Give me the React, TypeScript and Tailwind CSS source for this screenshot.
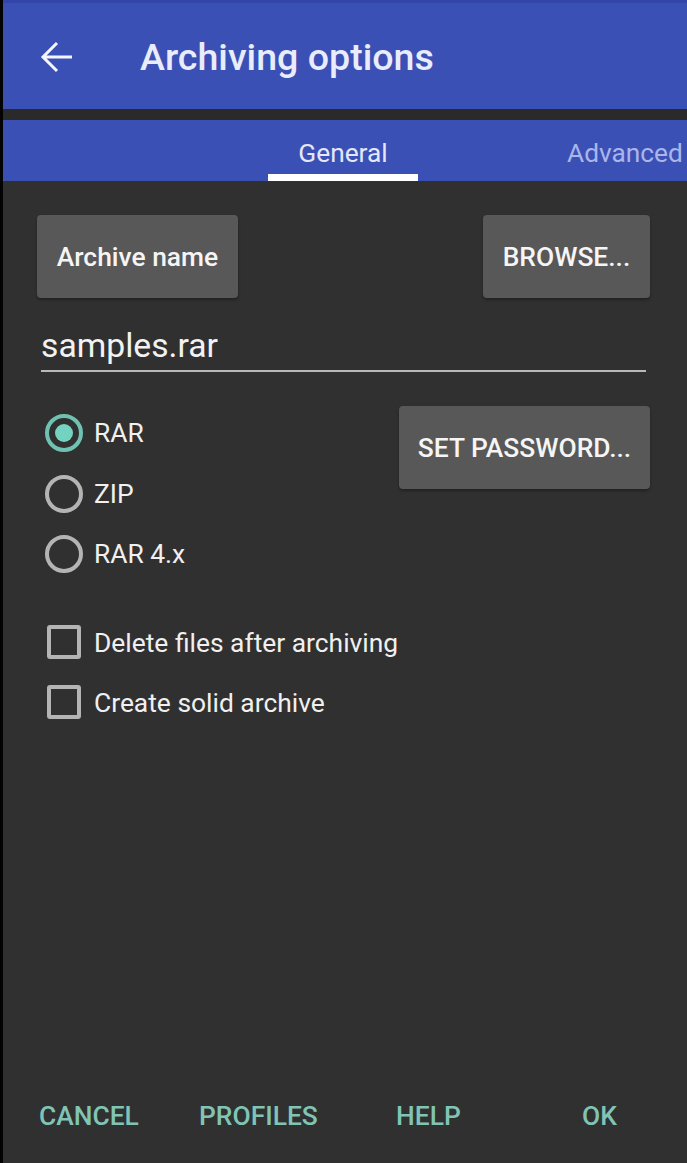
import React from "react";

function Radio({ label, checked }: { label: string; checked?: boolean }) {
  return (
    <div className="flex h-[60.5px] items-center">
      <div className={`flex h-[38px] w-[38px] items-center justify-center rounded-full border-[4px] ${checked ? "border-[#6fc2b1]" : "border-[#b4b4b4]"}`}>
        {checked && <div className="h-[18px] w-[18px] rounded-full bg-[#74d3c0]" />}
      </div>
      <span className="ml-[11px] text-[26.4px] leading-none text-[#f0f0f0]">{label}</span>
    </div>
  );
}

function Check({ label }: { label: string }) {
  return (
    <div className="flex h-[60.5px] items-center">
      <div className="ml-[2px] h-[34px] w-[34px] rounded-[3px] border-[4px] border-[#b4b4b4]" />
      <span className="ml-[13px] pt-[2px] text-[26.4px] leading-none text-[#f0f0f0]">{label}</span>
    </div>
  );
}

function Btn({ children, className }: { children: React.ReactNode; className: string }) {
  return (
    <div className={`flex h-[83px] items-center justify-center rounded-[4px] bg-[#585858] pt-[2px] text-[26.4px] font-medium leading-none text-[#f5f5f5] shadow-[0_2px_3px_rgba(0,0,0,0.3)] ${className}`}>
      {children}
    </div>
  );
}

export default function App() {
  return (
    <div className="flex h-[1163px] w-[687px] overflow-hidden bg-[#030303] pl-[3px] font-['Roboto',sans-serif]">
      <div className="flex w-[684px] flex-col bg-[#303030]">
        <div className="h-[3px] bg-[#3345a8]" />
        <header className="flex h-[106px] items-center bg-[#3b50b5]">
          <svg className="ml-[37px] h-[34px] w-[34px]" viewBox="0 0 34 34" fill="none" stroke="#f4f6ff" strokeWidth="3">
            <path d="M32 18H4M17 4L3 18L17 32" />
          </svg>
          <h1 className="ml-[66px] pt-[4px] text-[37.6px] font-medium leading-none text-[#e8ecfb]">Archiving options</h1>
        </header>
        <div className="h-[11px] bg-[#2a2a2a]" />
        <nav className="relative flex h-[61px] bg-[#3b50b5] text-[26.3px] leading-none">
          <div className="ml-[265px] flex h-full w-[150px] items-center justify-center border-b-[7px] border-white pt-[13px] text-[#e3e7fa]">General</div>
          <div className="ml-[149px] flex h-full items-center whitespace-nowrap pt-[6px] text-[#aab5ea]">Advanced</div>
        </nav>
        <main className="flex flex-1 flex-col pl-[34px] pr-[37px] pt-[34px]">
          <div className="flex justify-between">
            <Btn className="w-[201px]">Archive name</Btn>
            <Btn className="w-[167px]">BROWSE...</Btn>
          </div>
          <div className="ml-[4px] mr-[4px] mt-[23px] h-[51px] border-b-[2px] border-[#b9b9b9] text-[33.7px] leading-[49px] text-[#f2f2f2]">samples.rar</div>
          <div className="mt-[34px] flex items-start justify-between">
            <div className="-mt-[3px] ml-[8px] flex flex-col">
              <Radio label="RAR" checked />
              <Radio label="ZIP" />
              <Radio label="RAR 4.x" />
            </div>
            <Btn className="w-[251px]">SET PASSWORD...</Btn>
          </div>
          <div className="ml-[8px] mt-[27px] flex flex-col">
            <Check label="Delete files after archiving" />
            <Check label="Create solid archive" />
          </div>
        </main>
        <footer className="flex h-[94px] items-start pt-[34px] text-[26.4px] font-medium leading-none text-[#80c4b6]">
          <span className="ml-[36px] w-[160px]">CANCEL</span>
          <span className="w-[197px]">PROFILES</span>
          <span className="w-[186px]">HELP</span>
          <span>OK</span>
        </footer>
      </div>
    </div>
  );
}
